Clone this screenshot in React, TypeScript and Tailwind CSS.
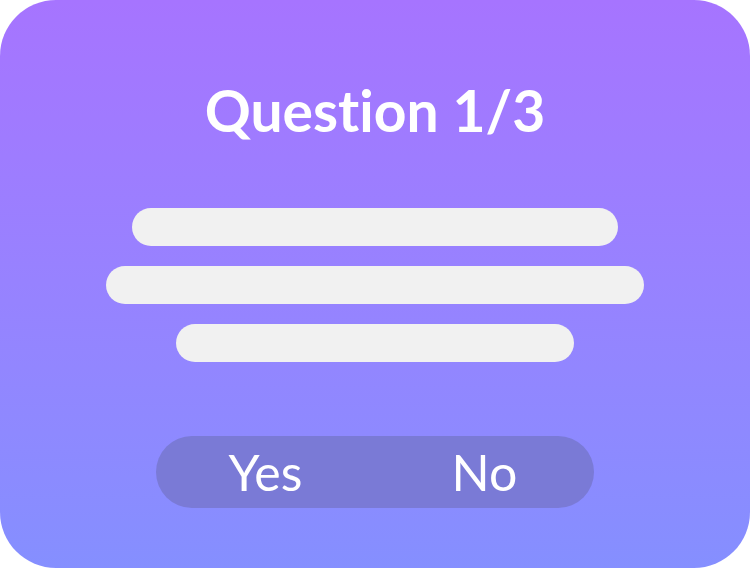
export default function App() {
  const lines = ["w-[486px]", "w-[538px]", "w-[398px]"];

  return (
    <div className="w-[750px] h-[568px] bg-white">
      <div
        className="w-full h-full rounded-[56px] bg-gradient-to-b from-[#a674ff] to-[#858fff] flex flex-col items-center [font-variant-ligatures:none]"
        style={{ fontFamily: "Lato, 'Noto Sans', sans-serif" }}
      >
        <h1 className="mt-[78px] text-[57px] leading-[64px] font-bold text-white">
          Question 1/3
        </h1>

        <div className="mt-[66px] flex flex-col items-center gap-5">
          {lines.map((w, i) => (
            <div key={i} className={`${w} h-[38px] rounded-full bg-[#f1f1f1]`} />
          ))}
        </div>

        <div className="mt-[74px] w-[438px] h-[72px] rounded-full bg-[#7a7ad6] flex">
          <button className="flex-1 text-white text-[50px] leading-none">Yes</button>
          <button className="flex-1 text-white text-[50px] leading-none">No</button>
        </div>
      </div>
    </div>
  );
}
